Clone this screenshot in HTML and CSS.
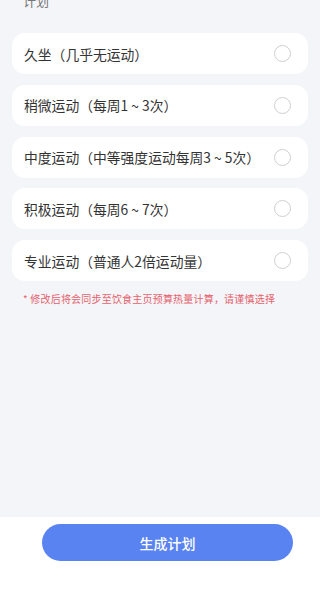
FILE: index.html
```html
<!DOCTYPE html>
<html lang="zh-CN">
<head>
<meta charset="utf-8">
<link rel="stylesheet" href="styles.css">
</head>
<body>
<div class="page">
  <main class="content">
    <div class="section-title">计划</div>
    <ul class="options">
      <li class="option"><span class="label">久坐（几乎无运动）</span><span class="radio"></span></li>
      <li class="option"><span class="label">稍微运动（每周1 ~ 3次）</span><span class="radio"></span></li>
      <li class="option"><span class="label">中度运动（中等强度运动每周3 ~ 5次）</span><span class="radio"></span></li>
      <li class="option"><span class="label">积极运动（每周6 ~ 7次）</span><span class="radio"></span></li>
      <li class="option"><span class="label">专业运动（普通人2倍运动量）</span><span class="radio"></span></li>
    </ul>
    <p class="note">* 修改后将会同步至饮食主页预算热量计算，请谨慎选择</p>
  </main>
  <footer class="footer">
    <button class="submit">生成计划</button>
  </footer>
</div>
</body>
</html>
```

FILE: styles.css
```css
* { box-sizing: border-box; }
html, body {
  margin: 0;
  padding: 0;
  height: 100%;
}
body {
  background: #f4f5f9;
  font-family: "Noto Sans CJK SC", "Noto Sans", sans-serif;
  color: #333;
  overflow: hidden;
}
.page {
  height: 590px;
  display: flex;
  flex-direction: column;
}
.content {
  flex: 1;
  padding: 0 12px;
}
.section-title {
  margin-top: -8px;
  padding-left: 11px;
  font-size: 13px;
  line-height: 18px;
  color: #777;
}
.options {
  list-style: none;
  margin: 23px 0 0;
  padding: 0;
  display: flex;
  flex-direction: column;
  gap: 10.75px;
}
.option {
  height: 41px;
  background: #fff;
  border-radius: 13px;
  display: flex;
  align-items: center;
  justify-content: space-between;
  padding: 0 17px 0 12px;
}
.label {
  font-size: 13.8px;
  color: #333;
}
.radio {
  width: 17px;
  height: 17px;
  border-radius: 50%;
  border: 1px solid #cfcfcf;
}
.note {
  margin: 11px 0 0;
  padding-left: 11px;
  font-size: 10px;
  line-height: 14px;
  letter-spacing: 0.2px;
  color: #e5626c;
}
.footer {
  height: 73px;
  background: #fff;
  padding-top: 7px;
}
.submit {
  display: block;
  margin-left: 42px;
  width: 251px;
  height: 37px;
  border: none;
  border-radius: 19px;
  background: #5a83f2;
  color: #fff;
  font-family: inherit;
  font-size: 14px;
  font-weight: 500;
  padding: 0;
}
```
